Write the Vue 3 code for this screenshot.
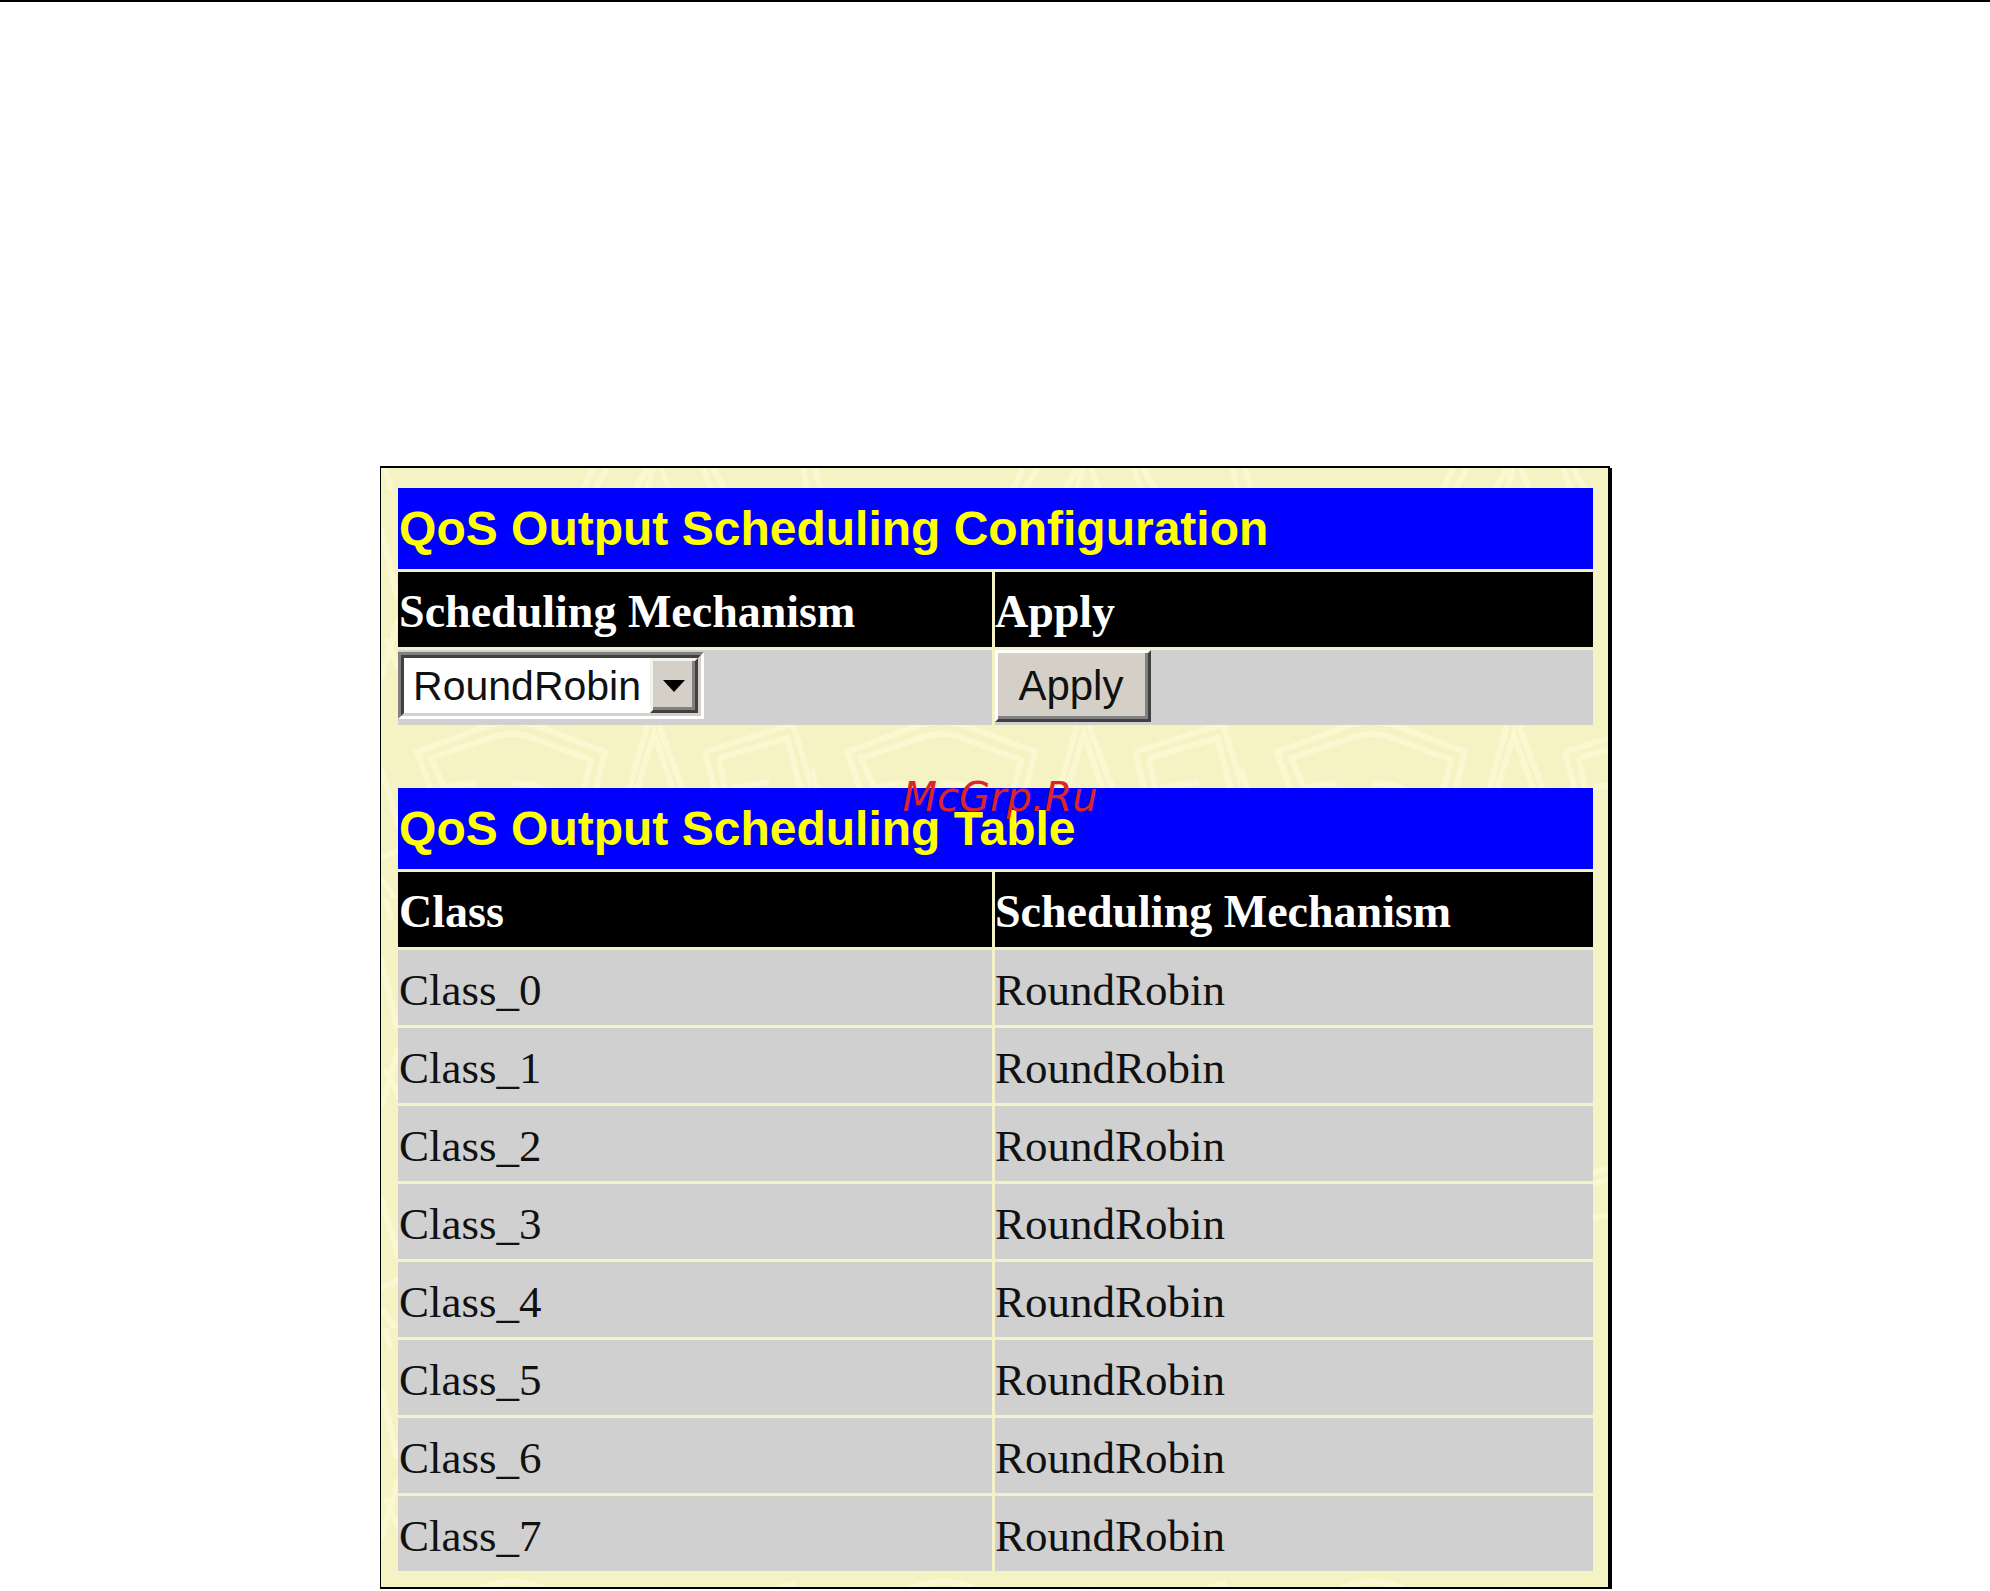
<script setup>
import { ref } from 'vue'

const mechanism = ref('RoundRobin')
const mechanisms = ['RoundRobin']
const classes = Array.from({ length: 8 }, (_, i) => ({ name: `Class_${i}`, mechanism: 'RoundRobin' }))
</script>

<template>
  <main class="page">
    <section class="panel">
      <svg class="texture" aria-hidden="true">
        <defs>
          <pattern id="weave" width="430" height="430" patternUnits="userSpaceOnUse">
            <g fill="none" stroke="#fbf8d1" stroke-width="6">
              <path d="M36 284 L112 256 Q131 252 150 256 L224 284 L208 350 L60 350 Z" />
              <path d="M50 290 L116 268 Q131 264 146 268 L210 292 L198 340 L72 340 Z" />
              <path d="M248 322 L266 258 M256 322 L273 266 L292 322 M278 258 L302 322" />
              <path d="M324 284 L412 256 L432 322 M338 290 L406 270 L420 322 M324 284 L334 322 M338 290 L344 322" />
              <path d="M66 320 Q80 314 96 316 M132 316 Q150 314 164 322 M350 320 L388 314" />
              <path d="M202 22 L212 0 M214 22 L226 0 M254 22 Q264 4 266 0 M266 22 L272 0 M280 0 L288 22 M322 0 L330 22 M332 0 L344 22 M422 0 L426 22 M434 0 L440 22 M4 0 L10 22" />
              <path d="M0 60 L16 130 M4 170 L18 200 M0 210 L18 150 M0 300 L18 360 M0 390 L18 382 M0 410 L14 430" />
            </g>
          </pattern>
        </defs>
        <rect width="100%" height="100%" fill="url(#weave)" />
      </svg>

      <form class="block" @submit.prevent>
        <table>
          <caption>QoS Output Scheduling Configuration</caption>
          <colgroup><col class="first"><col></colgroup>
          <thead>
            <tr><th scope="col"><label for="mechanism">Scheduling Mechanism</label></th><th scope="col">Apply</th></tr>
          </thead>
          <tbody class="controls">
            <tr>
              <td>
                <div class="dropdown">
                  <select id="mechanism" v-model="mechanism">
                    <option v-for="m in mechanisms" :key="m">{{ m }}</option>
                  </select>
                  <span class="arrow" aria-hidden="true">
                    <svg width="22" height="12" viewBox="0 0 22 12"><path d="M0 0H22L11 12Z" /></svg>
                  </span>
                </div>
              </td>
              <td><button type="submit">Apply</button></td>
            </tr>
          </tbody>
        </table>
      </form>

      <div class="block">
        <table>
          <caption>QoS Output Scheduling Table</caption>
          <colgroup><col class="first"><col></colgroup>
          <thead>
            <tr><th scope="col">Class</th><th scope="col">Scheduling Mechanism</th></tr>
          </thead>
          <tbody>
            <tr v-for="c in classes" :key="c.name">
              <td>{{ c.name }}</td>
              <td>{{ c.mechanism }}</td>
            </tr>
          </tbody>
        </table>
        <span class="watermark">McGrp.Ru</span>
      </div>
    </section>
  </main>
</template>

<style>
body {
  margin: 0;
  background: #fff;
}
</style>

<style scoped>
.page {
  box-sizing: border-box;
  border-top: 2px solid #000;
  padding: 464px 19.1% 0;
}
.panel {
  position: relative;
  display: flex;
  flex-direction: column;
  gap: 63px;
  padding: 20px 15px 16px 17px;
  border: solid #000;
  border-width: 2px 2px 2px 1px;
  box-shadow: 2px 2px 0 #000;
  background: #f5f2c4;
}
.texture {
  position: absolute;
  inset: 0;
  width: 100%;
  height: 100%;
}
.block {
  position: relative;
}
table {
  width: 100%;
  table-layout: fixed;
  border-collapse: separate;
  border-spacing: 0;
  font-family: "Liberation Serif", "Times New Roman", serif;
  font-size: 45px;
  line-height: 70px;
}
.first {
  width: 49.7%;
}
caption {
  height: 81px;
  padding-left: 1px;
  background: #00f;
  color: #ff0;
  font: bold 48px/81px "Liberation Sans", Arial, sans-serif;
  text-align: left;
}
th,
td {
  box-sizing: border-box;
  height: 78px;
  padding: 5px 0 0 1px;
  border-top: 3px solid #f6f2c8;
  text-align: left;
  white-space: nowrap;
}
th + th,
td + td {
  padding-left: 0;
  border-left: 3px solid #f6f2c8;
}
th {
  background: #000;
  color: #fff;
  font-size: 46px;
}
td {
  background: #d0d0d0;
  color: #111;
}
.controls td {
  padding: 0;
  vertical-align: top;
}
.dropdown {
  display: grid;
  width: 306px;
  height: 67px;
  margin-top: 2px;
  box-sizing: border-box;
  border: 3px solid;
  border-color: #808080 #fff #fff #808080;
}
select {
  grid-area: 1 / 1;
  appearance: none;
  box-sizing: border-box;
  width: 100%;
  height: 61px;
  margin: 0;
  padding: 2px 0 0 9px;
  border: 3px solid;
  border-color: #404040 #d4d0c8 #d4d0c8 #404040;
  border-radius: 0;
  background: #fff;
  color: #111;
  font: 41px/53px "Liberation Sans", Arial, sans-serif;
}
.arrow {
  grid-area: 1 / 1;
  justify-self: end;
  display: grid;
  place-items: center;
  box-sizing: border-box;
  width: 48px;
  height: 55px;
  margin: 3px 3px 0 0;
  border: 3px solid;
  border-color: #f4f2ee #404040 #404040 #f4f2ee;
  box-shadow: inset -3px -3px 0 #808080;
  background: #d4d0c8;
  pointer-events: none;
}
button {
  display: block;
  box-sizing: border-box;
  width: 156px;
  height: 72px;
  margin: 0;
  padding: 0 4px 0 0;
  border: 3px solid;
  border-color: #fff #404040 #404040 #fff;
  border-radius: 0;
  box-shadow: inset -3px -3px 0 #808080;
  background: #d4d0c8;
  color: #111;
  font: 42px/60px "Liberation Sans", Arial, sans-serif;
}
.watermark {
  position: absolute;
  top: -15px;
  left: 50%;
  margin-left: -93px;
  color: #dc2626;
  font: oblique 40px/48px "DejaVu Sans", Verdana, sans-serif;
  pointer-events: none;
}
</style>
